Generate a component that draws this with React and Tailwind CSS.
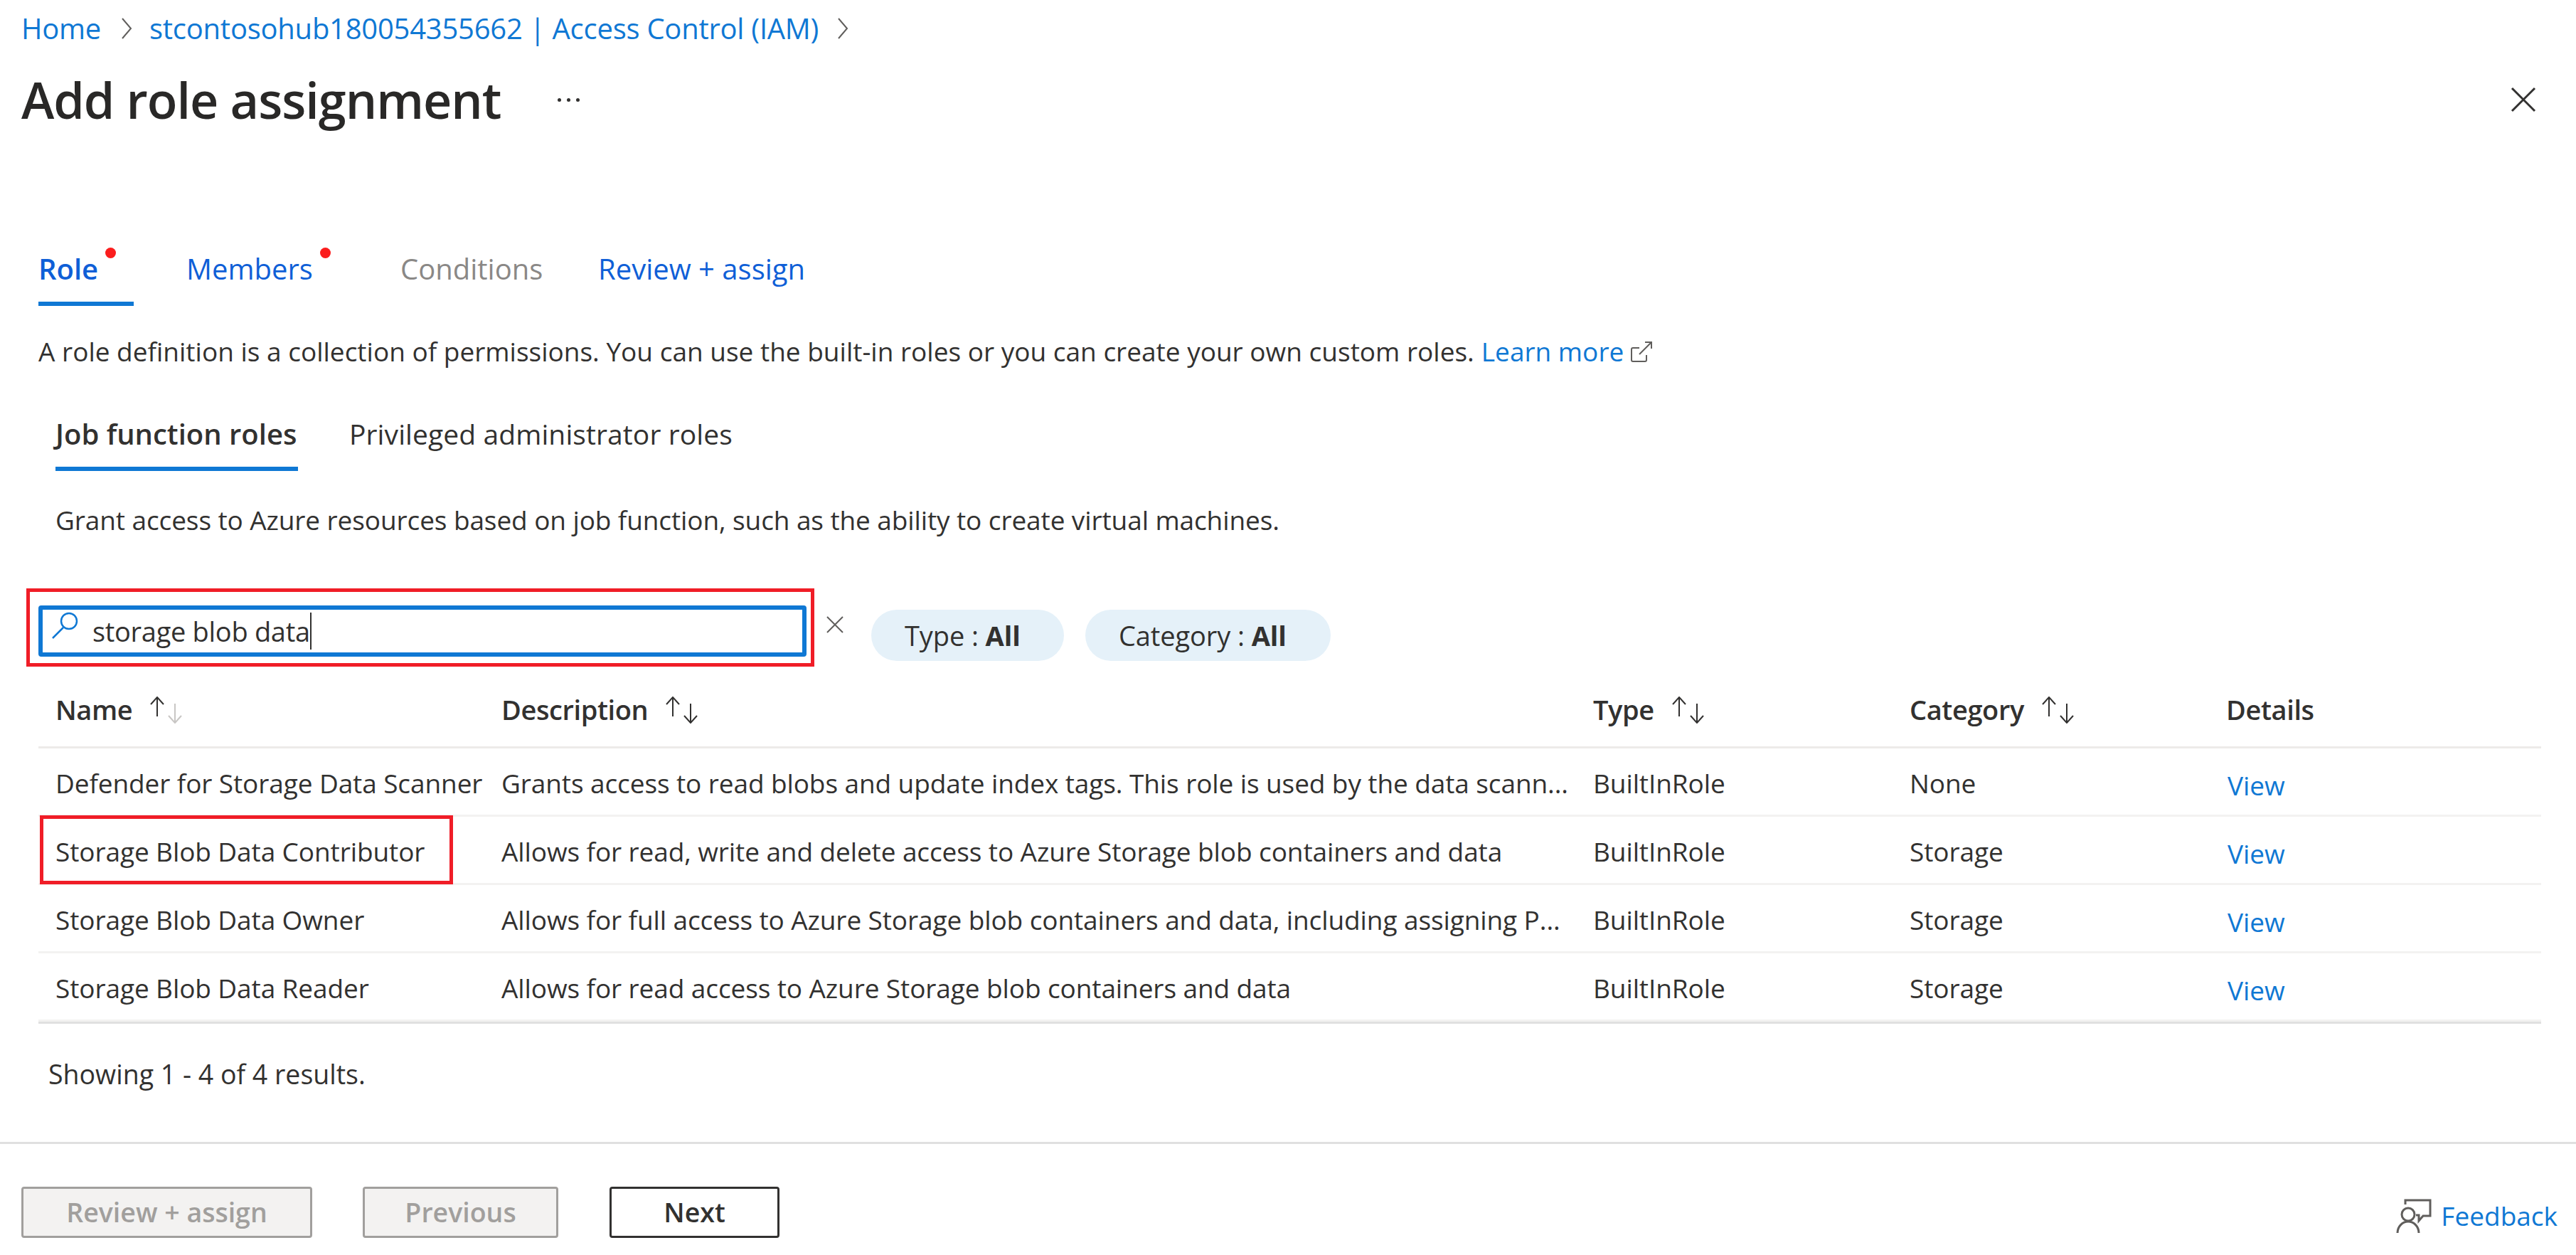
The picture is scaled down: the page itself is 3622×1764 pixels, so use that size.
import React from 'react';

const SortIcon = ({ dim }) => (
    <svg width="48" height="38" viewBox="0 0 48 38" fill="none" strokeWidth="2" className="shrink-0">
        <path d="M11 28V1M2 11l9-10 9 10" stroke="#323130" />
        <path d="M36 10v27M27 27l9 10 9-10" stroke={dim ? '#c8c6c4' : '#323130'} />
    </svg>
);

const rows = [
    ['Defender for Storage Data Scanner', 'Grants access to read blobs and update index tags. This role is used by the data scann...', 'BuiltInRole', 'None'],
    ['Storage Blob Data Contributor', 'Allows for read, write and delete access to Azure Storage blob containers and data', 'BuiltInRole', 'Storage'],
    ['Storage Blob Data Owner', 'Allows for full access to Azure Storage blob containers and data, including assigning P...', 'BuiltInRole', 'Storage'],
    ['Storage Blob Data Reader', 'Allows for read access to Azure Storage blob containers and data', 'BuiltInRole', 'Storage'],
];

const Chevron = () => (
    <svg width="16" height="30" viewBox="0 0 16 30" fill="none" stroke="#605e5c" strokeWidth="2" className="shrink-0">
        <path d="M2 1l12 14L2 29" />
    </svg>
);

const TopTab = ({ label, dot, color, active, className }) => (
    <div className={`relative h-full flex items-center pb-[4px] ${className}`}>
        <span className={`relative inline-block text-[40px] leading-[60px] ${color}`}>
            {label}
            {dot && <span className="absolute top-[0px] left-full ml-[10px] w-[15px] h-[15px] rounded-full bg-[#fb1d1d]" />}
        </span>
        {active && <span className="absolute left-0 bottom-0 w-[134px] h-[6px] bg-[#0f78d4]" />}
    </div>
);

const Pill = ({ label, className }) => (
    <div className={`h-[72px] mt-[30px] rounded-full bg-[#e5f1f9] flex items-center pl-[47px] text-[38px] tracking-[-0.1px] text-[#323130] ${className}`}>
        <span>{label} : <b className="font-bold">All</b></span>
    </div>
);

const App = () => {
    return (
        <div className="w-[3622px] h-[1764px] bg-white flex flex-col font-['Open_Sans',sans-serif] text-[#323130] overflow-hidden">
            <div className="h-[80px] pl-[30px] flex items-center text-[40px] tracking-[-0.25px] text-[#0f78d4]">
                <span>Home</span>
                <span className="ml-[28px]"><Chevron /></span>
                <span className="ml-[24px]">stcontosohub180054355662 | Access Control (IAM)</span>
                <span className="ml-[26px]"><Chevron /></span>
            </div>

            <div className="h-[120px] pl-[30px] pr-[56px] flex items-center">
                <h1 className="text-[70px] font-semibold tracking-[-1px] text-[#292827]">Add role assignment</h1>
                <div className="ml-[80px] flex gap-[8px]">
                    <span className="w-[5px] h-[5px] rounded-full bg-[#323130]" />
                    <span className="w-[5px] h-[5px] rounded-full bg-[#323130]" />
                    <span className="w-[5px] h-[5px] rounded-full bg-[#323130]" />
                </div>
                <svg width="36" height="36" viewBox="0 0 36 36" fill="none" stroke="#323130" strokeWidth="3" className="ml-auto">
                    <path d="M2 2l32 32M34 2L2 34" />
                </svg>
            </div>

            <div className="mt-[130px] h-[100px] pl-[54px] flex">
                <TopTab label="Role" dot active color="text-[#0f5fd7] font-semibold" className="w-[208px]" />
                <TopTab label="Members" dot color="text-[#0f5fd7]" className="w-[301px]" />
                <TopTab label="Conditions" color="text-[#8a8886]" className="w-[278px]" />
                <TopTab label="Review + assign" color="text-[#0f5fd7]" />
            </div>

            <div className="h-[64px] mt-[32px] pl-[54px] flex items-center text-[37px]">
                <span>A role definition is a collection of permissions. You can use the built-in roles or you can create your own custom roles.</span>
                <span className="ml-[10px] text-[#0f78d4]">Learn more</span>
                <svg width="30" height="30" viewBox="0 0 30 30" fill="none" stroke="#605e5c" strokeWidth="2" className="ml-[10px]">
                    <path d="M12 10H3a2 2 0 0 0-2 2v15a2 2 0 0 0 2 2h17a2 2 0 0 0 2-2v-7M20 2h9v9M29 2L12 19" />
                </svg>
            </div>

            <div className="h-[100px] mt-[36px] pl-[78px] flex">
                <div className="relative h-full flex items-center pb-[4px] w-[413px]">
                    <span className="text-[40px] font-semibold">Job function roles</span>
                    <span className="absolute left-0 bottom-0 w-[341px] h-[6px] bg-[#0f78d4]" />
                </div>
                <div className="h-full flex items-center pb-[4px] text-[39px] tracking-[0.1px]">Privileged administrator roles</div>
            </div>

            <div className="h-[64px] mt-[37px] pl-[78px] flex items-center text-[37px] tracking-[-0.1px]">
                Grant access to Azure resources based on job function, such as the ability to create virtual machines.
            </div>

            <div className="mt-[64px] pl-[37px] h-[110px] flex items-start">
                <div className="w-[1108px] h-[110px] border-[5px] border-[#f01d27] pl-[12px] pt-[19px]">
                    <div className="w-[1080px] h-[72px] border-[6px] border-[#0f78d4] rounded-[4px] flex items-center relative pl-[70px]">
                        <svg width="38" height="38" viewBox="0 0 38 38" fill="none" stroke="#0f78d4" strokeWidth="2.5" className="absolute left-[12px] top-[3px]">
                            <circle cx="25" cy="13" r="11" />
                            <path d="M17 22L2 37" />
                        </svg>
                        <span className="text-[38px] tracking-[-0.3px] leading-none">storage blob data</span>
                        <span className="w-[2px] h-[52px] bg-[#323130]" />
                    </div>
                </div>
                <svg width="24" height="24" viewBox="0 0 24 24" fill="none" stroke="#605e5c" strokeWidth="2" className="ml-[17px] mt-[39px]">
                    <path d="M1 1l22 22M23 1L1 23" />
                </svg>
                <Pill label="Type" className="ml-[39px] w-[271px]" />
                <Pill label="Category" className="ml-[30px] w-[345px]" />
            </div>

            <div className="ml-[54px] w-[3519px] mt-[15px]">
                <div className="h-[100px] pb-[6px] grid grid-cols-[651px_1535px_445px_445px_1fr] items-center border-b-[3px] border-[#edebe9] font-semibold text-[38px] tracking-[-0.4px]">
                    <div className="pl-[24px] flex items-center gap-[24px]">Name <SortIcon dim /></div>
                    <div className="flex items-center gap-[24px]">Description <SortIcon /></div>
                    <div className="flex items-center gap-[24px]">Type <SortIcon /></div>
                    <div className="flex items-center gap-[24px]">Category <SortIcon /></div>
                    <div>Details</div>
                </div>
                {rows.map((r, i) => (
                    <div key={r[0]} className="relative h-[96px] pt-[4px] grid grid-cols-[651px_1535px_445px_445px_1fr] items-center text-[37px] tracking-[-0.1px] border-b-[3px] border-[#f3f2f1]">
                        <div className="pl-[24px] whitespace-nowrap">{r[0]}</div>
                        <div className="whitespace-nowrap">{r[1]}</div>
                        <div>{r[2]}</div>
                        <div>{r[3]}</div>
                        <div className="pl-[2px] pt-[6px] text-[#0f78d4]">View</div>
                        {i === 1 && <span className="absolute left-[2px] top-[-2px] w-[581px] h-[97px] border-[5px] border-[#f01d27]" />}
                    </div>
                ))}
                <div className="h-[3px] bg-[#e0e0e0]" />
            </div>

            <div className="h-[64px] mt-[39px] pl-[68px] flex items-center text-[37.5px]">Showing 1 - 4 of 4 results.</div>

            <div className="mt-[63px] border-t-[3px] border-[#e0e0e0] flex-1 flex items-start pl-[30px] pr-[26px] pt-[60px]">
                <button className="w-[409px] h-[72px] rounded-[4px] border-[3px] border-[#a19f9d] bg-[#f3f2f1] text-[#a19f9d] text-[37.5px] font-semibold">Review + assign</button>
                <button className="ml-[71px] w-[275px] h-[72px] rounded-[4px] border-[3px] border-[#a19f9d] bg-[#f3f2f1] text-[#a19f9d] text-[37.5px] font-semibold">Previous</button>
                <button className="ml-[72px] w-[239px] h-[72px] rounded-[4px] border-[3px] border-[#323130] bg-white text-[#323130] text-[37.5px] font-semibold">Next</button>
                <div className="ml-auto mt-[13px] flex items-center gap-[13px] text-[#0f78d4] text-[37px]">
                    <svg width="50" height="50" viewBox="0 0 50 50" fill="none" stroke="#605e5c" strokeWidth="3">
                        <path d="M13 9V3h35v22H38l-6 7v-8h-4" />
                        <circle cx="17" cy="23" r="9" />
                        <path d="M2 49c0-9 7-16 15-16s15 7 15 16" />
                    </svg>
                    <span>Feedback</span>
                </div>
            </div>
        </div>
    );
};

export default App;
